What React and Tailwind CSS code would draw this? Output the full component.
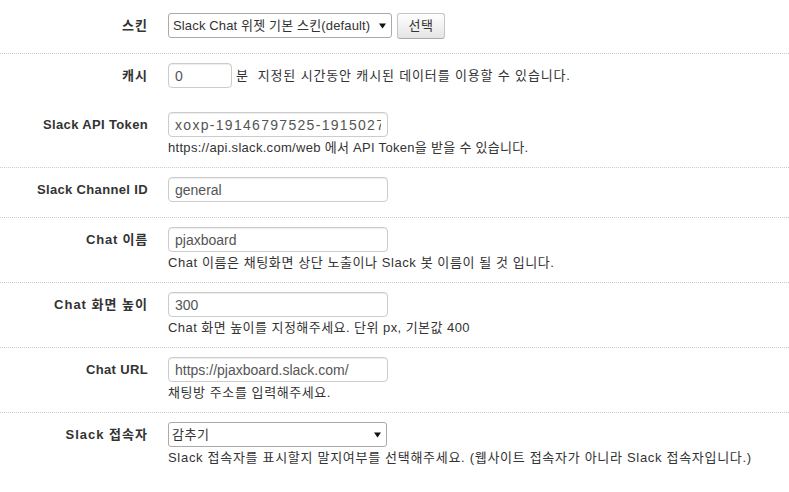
import React from "react";

const Arrow = () => (
  <svg width="7" height="6" viewBox="0 0 7 6" className="shrink-0">
    <path d="M0 0.5 L7 0.5 L3.5 5.5 Z" fill="#111" />
  </svg>
);

function Label({ children, track = "tracking-[0.35px]" }) {
  return (
    <div className={`w-[148px] shrink-0 h-[25px] flex items-center justify-end text-[13px] font-bold text-[#333] whitespace-nowrap ${track}`}>
      {children}
    </div>
  );
}

function Input({ value, className = "w-[220px]", extra = "" }) {
  return (
    <input
      readOnly
      defaultValue={value}
      className={`${className} h-[25px] border border-[#ccc] rounded-[4px] px-[6px] text-[14px] text-[#555] bg-white shadow-[inset_0_1px_1px_rgba(0,0,0,0.075)] outline-none ${extra}`}
    />
  );
}

function Help({ children, track = "tracking-[0.58px]" }) {
  return <div className={`mt-[3px] leading-[16px] text-[13px] text-[#333] whitespace-nowrap ${track}`}>{children}</div>;
}

export default function App() {
  return (
    <div className="w-[789px] min-h-[492px] bg-white font-['Liberation_Sans','Noto_Sans_CJK_KR',sans-serif] text-[#333]">
      {/* 스킨 */}
      <div className="flex gap-[20px] pt-[13px] pb-[14px]">
        <Label track="tracking-[1px]">스킨</Label>
        <div className="flex items-start gap-[5px]">
          <div className="w-[224px] h-[25px] border border-[#aaa] rounded-[3px] bg-white flex items-center justify-between pl-[4px] pr-[5px] text-[13px] text-[#333] whitespace-nowrap tracking-[0.15px]">
            <span>Slack Chat 위젯 기본 스킨(default)</span>
            <Arrow />
          </div>
          <button className="w-[48px] h-[26px] border border-[#c4c4c4] border-b-[#aaa] rounded-[3px] bg-linear-to-b from-white to-[#e4e4e4] text-[13px] text-[#333] flex items-center justify-center tracking-[0.5px]">
            선택
          </button>
        </div>
      </div>

      {/* 캐시 + Token */}
      <div className="border-t border-dotted border-[#ccc] pt-[9px] pb-[11px]">
        <div className="flex gap-[20px]">
          <Label track="tracking-[1px]">캐시</Label>
          <div className="flex items-center h-[25px] text-[13px] whitespace-nowrap">
            <Input value="0" className="w-[64px]" />
            <span className="ml-[4px] tracking-[0.85px]">분 &nbsp;지정된 시간동안 캐시된 데이터를 이용할 수 있습니다.</span>
          </div>
        </div>
        <div className="flex gap-[20px] mt-[24px]">
          <Label>Slack API Token</Label>
          <div>
            <Input value="xoxp-19146797525-19150277451-19150277539" extra="tracking-[1.3px]" />
            <Help track="tracking-[0.3px]">https://api.slack.com/web 에서 API Token을 받을 수 있습니다.</Help>
          </div>
        </div>
      </div>

      {/* Channel */}
      <div className="border-t border-dotted border-[#ccc] pt-[9px] pb-[15px] flex gap-[20px]">
        <Label>Slack Channel ID</Label>
        <div>
          <Input value="general" />
        </div>
      </div>

      {/* Chat 이름 */}
      <div className="border-t border-dotted border-[#ccc] pt-[9px] pb-[11px] flex gap-[20px]">
        <Label track="tracking-[0.8px]">Chat 이름</Label>
        <div>
          <Input value="pjaxboard" />
          <Help>Chat 이름은 채팅화면 상단 노출이나 Slack 봇 이름이 될 것 입니다.</Help>
        </div>
      </div>

      {/* Chat 화면 높이 */}
      <div className="border-t border-dotted border-[#ccc] pt-[9px] pb-[11px] flex gap-[20px]">
        <Label track="tracking-[1px]">Chat 화면 높이</Label>
        <div>
          <Input value="300" />
          <Help track="tracking-[0.45px]">Chat 화면 높이를 지정해주세요. 단위 px, 기본값 400</Help>
        </div>
      </div>

      {/* Chat URL */}
      <div className="border-t border-dotted border-[#ccc] pt-[9px] pb-[11px] flex gap-[20px]">
        <Label>Chat URL</Label>
        <div>
          <Input value="https://pjaxboard.slack.com/" />
          <Help>채팅방 주소를 입력해주세요.</Help>
        </div>
      </div>

      {/* Slack 접속자 */}
      <div className="border-t border-dotted border-[#ccc] pt-[9px] pb-[11px] flex gap-[20px]">
        <Label track="tracking-[1px]">Slack 접속자</Label>
        <div>
          <div className="w-[219px] h-[25px] border border-[#aaa] rounded-[3px] bg-white flex items-center justify-between pl-[3px] pr-[5px] text-[13px] text-[#333] tracking-[0.5px]">
            <span>감추기</span>
            <Arrow />
          </div>
          <Help track="tracking-[0.7px]">Slack 접속자를 표시할지 말지여부를 선택해주세요. (웹사이트 접속자가 아니라 Slack 접속자입니다.)</Help>
        </div>
      </div>
    </div>
  );
}
